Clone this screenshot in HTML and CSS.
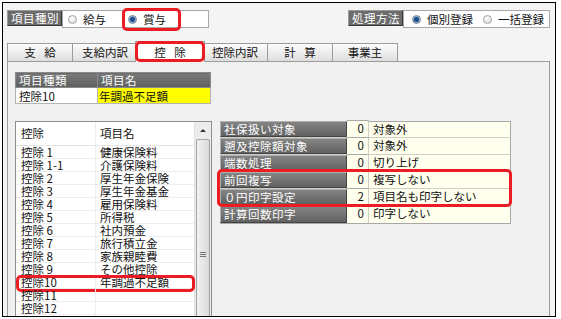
FILE: index.html
```html
<!DOCTYPE html>
<html lang="ja">
<head>
  <meta charset="UTF-8" />
  <title>控除項目設定</title>
  <link rel="stylesheet" href="styles.css">
</head>
<body>
  <div class="frame">
    <!-- 上部：項目種別・処理方法 -->
    <div class="topbar">
      <div class="field">
        <span class="field-label">項目種別</span>
        <div class="radio-group kind">
          <label class="radio"><span class="dot"></span>給与</label>
          <label class="radio on second"><span class="dot"></span>賞与<span class="mark mark-radio"></span></label>
        </div>
      </div>
      <div class="field">
        <span class="field-label">処理方法</span>
        <div class="radio-group method">
          <label class="radio on"><span class="dot"></span>個別登録</label>
          <label class="radio second"><span class="dot"></span>一括登録</label>
        </div>
      </div>
    </div>

    <!-- タブ -->
    <div class="tabs">
      <div class="tab spaced">支 給</div>
      <div class="tab">支給内訳</div>
      <div class="tab active spaced">控 除<span class="mark mark-tab"></span></div>
      <div class="tab">控除内訳</div>
      <div class="tab spaced">計 算</div>
      <div class="tab">事業主</div>
    </div>

    <div class="panel">
      <table class="item-table">
        <tr>
          <th class="col-kind">項目種類</th>
          <th>項目名</th>
        </tr>
        <tr>
          <td>控除10</td>
          <td class="highlight">年調過不足額</td>
        </tr>
      </table>

      <div class="lower">
        <!-- 控除一覧 -->
        <div class="list">
          <div class="list-body">
            <div class="list-head">
              <span class="c1">控除</span>
              <span class="c2">項目名</span>
            </div>
            <div class="row"><span class="c1">控除 1</span><span class="c2">健康保険料</span></div>
            <div class="row"><span class="c1">控除 1-1</span><span class="c2">介護保険料</span></div>
            <div class="row"><span class="c1">控除 2</span><span class="c2">厚生年金保険</span></div>
            <div class="row"><span class="c1">控除 3</span><span class="c2">厚生年金基金</span></div>
            <div class="row"><span class="c1">控除 4</span><span class="c2">雇用保険料</span></div>
            <div class="row"><span class="c1">控除 5</span><span class="c2">所得税</span></div>
            <div class="row"><span class="c1">控除 6</span><span class="c2">社内預金</span></div>
            <div class="row"><span class="c1">控除 7</span><span class="c2">旅行積立金</span></div>
            <div class="row"><span class="c1">控除 8</span><span class="c2">家族親睦費</span></div>
            <div class="row"><span class="c1">控除 9</span><span class="c2">その他控除</span></div>
            <div class="row"><span class="c1">控除10</span><span class="c2">年調過不足額</span><span class="mark mark-row"></span></div>
            <div class="row"><span class="c1">控除11</span><span class="c2"></span></div>
            <div class="row"><span class="c1">控除12</span><span class="c2"></span></div>
          </div>
          <div class="scrollbar">
            <div class="scroll-btn"><span class="arrow"></span></div>
            <div class="thumb"><span class="grip"></span></div>
          </div>
        </div>

        <!-- 設定項目 -->
        <div class="props">
          <div class="prop"><span class="prop-label">社保扱い対象</span><span class="prop-num">0</span><span class="prop-val">対象外</span></div>
          <div class="prop"><span class="prop-label">遡及控除額対象</span><span class="prop-num">0</span><span class="prop-val">対象外</span></div>
          <div class="prop"><span class="prop-label">端数処理</span><span class="prop-num">0</span><span class="prop-val">切り上げ</span></div>
          <div class="prop"><span class="prop-label">前回複写</span><span class="prop-num">0</span><span class="prop-val">複写しない</span></div>
          <div class="prop"><span class="prop-label">０円印字設定</span><span class="prop-num">2</span><span class="prop-val">項目名も印字しない</span></div>
          <div class="prop"><span class="prop-label">計算回数印字</span><span class="prop-num">0</span><span class="prop-val">印字しない</span></div>
          <span class="mark mark-props"></span>
        </div>
      </div>
    </div>
  </div>
</body>
</html>
```

FILE: styles.css
```css
:root {
  --label-gray: #6c6c6c;
  --border-gray: #9c9c9c;
  --mark-red: #ec1c24;
  --cream: #ffffee;
}

* {
  box-sizing: border-box;
  margin: 0;
  padding: 0;
}

body {
  font-family: "Noto Sans CJK JP", "Liberation Sans", sans-serif;
  font-size: 11.5px;
  color: #111;
  background: #fff;
  padding: 2px 0 0 2px;
}

.frame {
  width: 554px;
  height: 315px;
  border: 1px solid #000;
  background: #f4f4f4;
  overflow: hidden;
}

/* 上部バー */
.topbar {
  display: flex;
  justify-content: space-between;
  padding: 7px 5px 0 4px;
}

.field {
  display: flex;
  align-items: flex-start;
}

.field-label {
  display: block;
  height: 16px;
  width: 55px;
  line-height: 14px;
  padding-left: 3px;
  color: #fff;
  background: var(--label-gray);
  border: 1px solid #9a9a9a;
  border-right-color: #3a3a3a;
  border-bottom-color: #3a3a3a;
  letter-spacing: 0.5px;
}

.radio-group {
  display: flex;
  height: 18px;
  background: #fff;
  border: 1px solid #a8a8a8;
}

.kind {
  width: 147px;
  padding-left: 5px;
}

.kind .second {
  margin-left: 22px;
}

.method {
  width: 147px;
  padding-left: 8px;
}

.method .second {
  margin-left: 10px;
}

.radio {
  position: relative;
  display: flex;
  align-items: center;
  line-height: 16px;
}

.dot {
  width: 9px;
  height: 9px;
  margin-right: 6px;
  border-radius: 50%;
  border: 1px solid #a4a4a4;
  background: radial-gradient(circle at 40% 35%, #fff 0, #e2e2e2 70%);
}

.radio.on .dot {
  border-color: #7d8793;
  background: radial-gradient(circle, #1d4e8c 0, #1d4e8c 2px, #7ea6d2 3px, #eef2f8 4.5px);
}

/* タブ */
.tabs {
  display: flex;
  align-items: flex-end;
  margin-top: 15px;
  padding-left: 4px;
  height: 18px;
}

.tab {
  width: 66px;
  height: 18px;
  margin-left: -1px;
  text-align: center;
  line-height: 16px;
  background: linear-gradient(#fdfdfd, #dedede);
  border: 1px solid var(--border-gray);
  border-bottom: none;
}

.tab:first-child {
  margin-left: 0;
}

.tab.active {
  position: relative;
  z-index: 1;
  width: 70px;
  height: 21px;
  margin: 0 -2px -1px -3px;
  line-height: 20px;
  background: #fff;
}

.spaced {
  word-spacing: 6px;
}

/* パネル */
.panel {
  height: 300px;
  margin: 0 5px 0 4px;
  padding: 10px 7px 0;
  background: #f0f0f0;
  border: 1px solid var(--border-gray);
}

.item-table {
  border-collapse: collapse;
  width: 196px;
}

.item-table th {
  height: 15px;
  padding-left: 3px;
  text-align: left;
  font-weight: normal;
  line-height: 13px;
  color: #fff;
  background: linear-gradient(#7a7a7a, #5e5e5e);
  border: 1px solid #8a8a8a;
  letter-spacing: 0.5px;
}

.item-table .col-kind {
  width: 82px;
}

.item-table td {
  height: 16px;
  padding-left: 3px;
  line-height: 14px;
  background: #fff;
  border: 1px solid #b4b4b4;
}

.item-table td.highlight {
  padding-left: 1px;
  background: #ffff00;
}

.lower {
  display: flex;
  align-items: flex-start;
  gap: 8px;
  margin-top: 17px;
}

/* 一覧 */
.list {
  display: flex;
  width: 197px;
  height: 200px;
  background: #fff;
  border: 1px solid #8e8f94;
}

.list-body {
  flex: 1;
}

.list-head,
.row {
  position: relative;
  display: flex;
}

.list-head {
  height: 24px;
  line-height: 22px;
  border-bottom: 1px solid #e4e4e4;
}

.row {
  height: 13px;
  line-height: 12px;
  border-bottom: 1px solid #ededed;
}

.c1 {
  width: 80px;
  padding-left: 5px;
  border-right: 1px solid #efefef;
  white-space: pre;
}

.c2 {
  flex: 1;
  padding-left: 4px;
}

.scrollbar {
  width: 17px;
  background: #ececec;
  border-left: 1px solid #e0e0e0;
}

.scroll-btn {
  display: flex;
  justify-content: center;
  align-items: center;
  height: 17px;
}

.arrow {
  width: 0;
  height: 0;
  border-left: 3px solid transparent;
  border-right: 3px solid transparent;
  border-bottom: 3px solid #333;
}

.thumb {
  display: flex;
  justify-content: center;
  align-items: center;
  height: 230px;
  margin: 0 1px;
  border: 1px solid #a2a2a2;
  border-radius: 2px;
  background: linear-gradient(90deg, #f2f2f2, #dadada);
}

.grip {
  width: 6px;
  height: 5px;
  border-top: 1px solid #777;
  border-bottom: 1px solid #777;
  background: linear-gradient(#777, #777) center / 6px 1px no-repeat;
}

/* 設定項目 */
.props {
  position: relative;
  width: 291px;
  background: var(--cream);
  border-right: 1px solid #a8a8a8;
  border-bottom: 1px solid #a8a8a8;
}

.prop {
  display: flex;
  height: 17px;
  line-height: 15px;
  border-bottom: 1px solid #cfcfc6;
}

.prop:last-of-type {
  border-bottom: none;
}

.prop-label {
  width: 127px;
  padding-left: 3px;
  color: #fff;
  background: linear-gradient(#848484, #626262);
  border: 1px solid #b0b0b0;
  border-right-color: #444;
  border-bottom-color: #444;
  letter-spacing: 0.5px;
}

.prop-num {
  width: 22px;
  padding-right: 4px;
  text-align: right;
  border-right: 1px solid #cfcfc6;
  border-top: 1px solid #a8a8a8;
  margin-top: -1px;
}

.prop:first-child .prop-num,
.prop:first-child .prop-val {
  border-top: 1px solid #a8a8a8;
}

.prop-val {
  flex: 1;
  padding-left: 4px;
}

/* 赤枠の注記 */
.mark {
  position: absolute;
  border: 3px solid var(--mark-red);
  border-radius: 5px;
  pointer-events: none;
}

.mark-radio {
  top: -3px;
  bottom: -4px;
  left: -6px;
  right: -15px;
}

.mark-tab {
  top: -1px;
  bottom: 0;
  left: -1px;
  right: -1px;
}

.mark-row {
  top: -1px;
  bottom: -4px;
  left: 0;
  right: -1px;
}

.mark-props {
  top: 48px;
  height: 38px;
  left: -3px;
  right: -2px;
}
```
